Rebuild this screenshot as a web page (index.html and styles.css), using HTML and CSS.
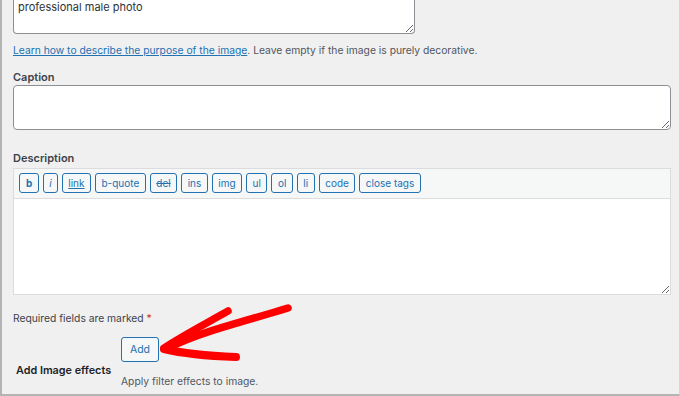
FILE: index.html
```html
<!DOCTYPE html>
<html>
<head>
<meta charset="utf-8">
<link rel="stylesheet" href="styles.css">
</head>
<body>
<div class="panel">
  <textarea class="field field-alt">professional male photo</textarea>
  <p class="help"><a href="#">Learn how to describe the purpose of the image</a>. Leave empty if the image is purely decorative.</p>

  <label class="label label-caption">Caption</label>
  <textarea class="field field-caption"></textarea>

  <label class="label label-desc">Description</label>
  <div class="editor">
    <div class="toolbar">
      <button class="qt qt-b">b</button>
      <button class="qt qt-i">i</button>
      <button class="qt qt-link">link</button>
      <button class="qt">b-quote</button>
      <button class="qt qt-del">del</button>
      <button class="qt">ins</button>
      <button class="qt">img</button>
      <button class="qt">ul</button>
      <button class="qt">ol</button>
      <button class="qt">li</button>
      <button class="qt">code</button>
      <button class="qt">close tags</button>
    </div>
    <textarea class="editor-area"></textarea>
  </div>

  <p class="required">Required fields are marked <span class="star">*</span></p>

  <div class="effects">
    <div class="effects-label">Add Image effects</div>
    <div class="effects-field">
      <button class="add-btn">Add</button>
      <p class="effects-desc">Apply filter effects to image.</p>
    </div>
  </div>

  <svg class="arrow" width="160" height="70" viewBox="150 300 160 70">
    <path d="M288 308 C 250 320, 205 330, 170 347" fill="none" stroke="#ff0000" stroke-width="7.5" stroke-linecap="round"/>
    <path d="M228 311 C 205 324, 182 336, 164 348" fill="none" stroke="#ff0000" stroke-width="7.5" stroke-linecap="round"/>
    <path d="M164 349 C 185 354, 210 356, 236 357" fill="none" stroke="#ff0000" stroke-width="8" stroke-linecap="round"/>
  </svg>
</div>
</body>
</html>
```

FILE: styles.css
```css
html, body {
  margin: 0;
  padding: 0;
  background: #f0f0f1;
}
body {
  font-family: Inter, "Liberation Sans", Arial, sans-serif;
  font-size: 10.3px;
  color: #3c434a;
}
.panel {
  position: relative;
  box-sizing: border-box;
  width: 680px;
  height: 396px;
  border-left: 2px solid #b4b4b6;
  border-bottom: 2px solid #b4b4b6;
  border-right: 1px solid #d6d6d8;
  padding: 0 9px 0 11px;
  display: flex;
  flex-direction: column;
  align-items: flex-start;
}
.field {
  display: block;
  box-sizing: border-box;
  border: 1px solid #8c8f94;
  border-radius: 4px;
  background: #fff;
  font-family: inherit;
  font-size: 11px;
  color: #2c3338;
  padding: 4px 4px;
  margin: 0;
  outline: none;
}
.field-alt {
  width: 402px;
  height: 34px;
  border-top: none;
  border-top-left-radius: 0;
  border-top-right-radius: 0;
  padding-top: 0;
  line-height: 15px;
  resize: vertical;
  overflow: hidden;
}
.help {
  margin: 9px 0 0;
  line-height: 15px;
  color: #50575e;
}
.help a {
  color: #2271b1;
  text-decoration: underline;
}
.label {
  display: block;
  font-weight: 600;
  font-size: 11px;
  color: #3c434a;
  line-height: 14px;
}
.label-caption {
  margin-top: 12px;
}
.field-caption {
  width: 658px;
  height: 45px;
  margin-top: 1px;
  resize: vertical;
}
.label-desc {
  margin-top: 21px;
}
.editor {
  margin-top: 3px;
  width: 658px;
  box-sizing: border-box;
  border: 1px solid #dcdcde;
  background: #fff;
}
.toolbar {
  background: #f6f7f7;
  border-bottom: 1px solid #dcdcde;
  padding: 4px 5px 4px;
  display: flex;
  gap: 4px;
  height: 30px;
  box-sizing: border-box;
}
.qt {
  font-family: inherit;
  font-size: 10px;
  color: #2271b1;
  background: #f6f7f7;
  border: 1px solid #2271b1;
  border-radius: 3px;
  height: 20px;
  padding: 0 5.5px;
  margin: 0;
  line-height: 18px;
}
.qt-b { font-weight: 700; padding: 0 6px; }
.qt-i { font-style: italic; padding: 0 5px; }
.qt-link { text-decoration: underline; }
.qt-del { text-decoration: line-through; }
.editor-area {
  display: block;
  width: 100%;
  height: 95px;
  box-sizing: border-box;
  border: none;
  margin: 0;
  padding: 0;
  outline: none;
  resize: vertical;
  background: #fff;
}
.required {
  margin: 16px 0 0;
  line-height: 14px;
  color: #3c434a;
}
.star {
  color: #d63638;
}
.effects {
  display: flex;
  align-items: center;
  margin-top: 12px;
}
.effects-label {
  width: 108px;
  padding-left: 3px;
  box-sizing: border-box;
  font-weight: 600;
  font-size: 10.8px;
  color: #1d2327;
  padding-top: 15px;
}
.effects-field {
  display: flex;
  flex-direction: column;
  align-items: flex-start;
}
.add-btn {
  font-family: inherit;
  font-size: 10.5px;
  color: #2271b1;
  background: #f6f7f7;
  border: 1px solid #2271b1;
  border-radius: 3px;
  height: 25px;
  width: 38px;
  padding: 0;
  margin: 0;
}
.effects-desc {
  margin: 12px 0 0;
  line-height: 14px;
  color: #50575e;
}
.arrow {
  position: absolute;
  left: 148px;
  top: 300px;
}
```
